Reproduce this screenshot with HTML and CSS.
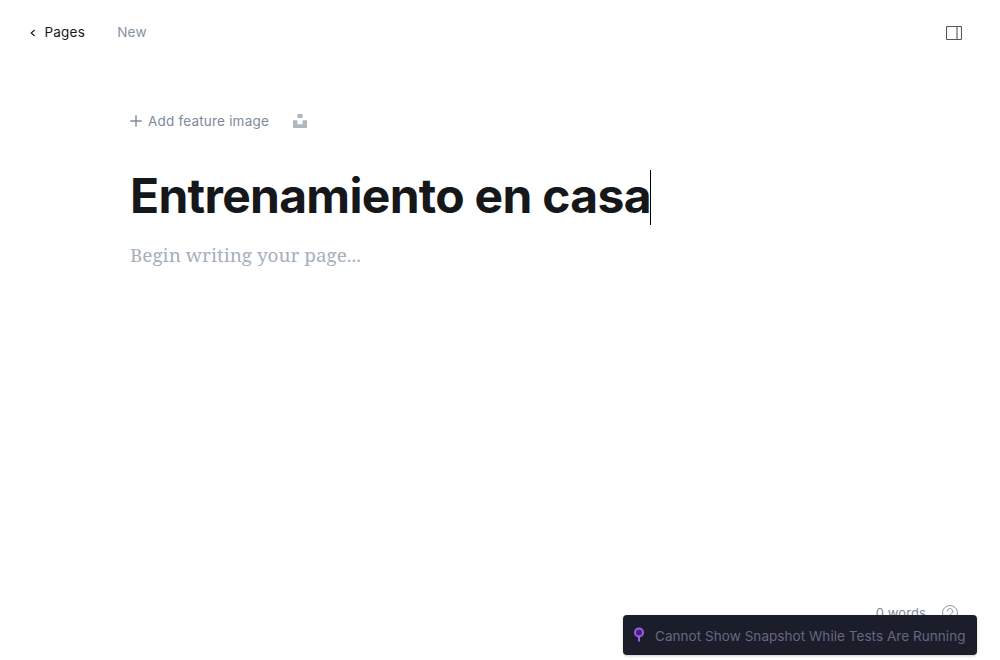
FILE: index.html
```html
<!DOCTYPE html>
<html lang="en">
<head>
<meta charset="utf-8">
<title>Ghost editor</title>
<link rel="stylesheet" href="styles.css">
</head>
<body>
<div class="editor">
  <header class="topbar">
    <nav class="crumbs">
      <a class="back"><svg class="chevron" width="6" height="8" viewBox="0 0 6 8"><path d="M4.6 1 1.2 4l3.4 3"/></svg><span class="back-label">Pages</span></a>
      <span class="status">New</span>
    </nav>
    <svg class="sidebar-icon" width="16" height="14" viewBox="0 0 16 14"><rect x=".5" y=".5" width="15" height="13" rx="1"/><path d="M11 .5v13"/></svg>
  </header>
  <main class="page">
    <div class="feature">
      <svg class="plus" width="12" height="12" viewBox="0 0 12 12"><path d="M6 .3v11.4M.3 6h11.4"/></svg>
      <span class="feature-label">Add feature image</span>
      <svg class="unsplash" width="14" height="14" viewBox="0 0 14 14"><path d="M4.4 0h5.2v4H4.4zM0 6.2h4.4v4h5.2v-4H14V14H0z"/></svg>
    </div>
    <h1 class="title"><span>Entrenamiento en casa</span><i class="caret"></i></h1>
    <p class="placeholder">Begin writing your page...</p>
  </main>
  <footer class="footer">
    <span class="words">0 words</span>
    <svg class="help" width="16" height="16" viewBox="0 0 16 16"><circle cx="8" cy="8" r="7.5"/><path d="M5.1 6.4a2.9 2.7 0 1 1 4.3 2.3C8.3 9.3 8 9.7 8 10.6M8 12v1"/></svg>
  </footer>
  <div class="toast">
    <svg class="pin" width="12" height="16" viewBox="0 0 12 16"><circle class="pin-head" cx="6" cy="5.5" r="4"/><path d="M6 9.5V14.5"/></svg>
    <span class="toast-label">Cannot Show Snapshot While Tests Are Running</span>
  </div>
</div>
</body>
</html>
```
FILE: styles.css
```css
body { margin: 0; background: #fff; font-family: Inter, sans-serif; }
.editor { position: relative; height: 660px; overflow: hidden; display: flex; flex-direction: column; }
svg { display: block; flex: none; fill: none; }
.topbar { display: flex; justify-content: space-between; align-items: center; height: 34px; padding: 16px 38px 0 30px; }
.crumbs, .back { display: flex; align-items: center; }
.crumbs { font-size: 13.5px; line-height: 20px; letter-spacing: .25px; padding-bottom: 2px; }
.back { color: #15171a; gap: 8.4px; }
.chevron { stroke: #15171a; stroke-width: 1.1; margin-top: 2px; }
.status { color: #8492a2; margin-left: 32px; }
.sidebar-icon { stroke: #50565d; stroke-width: 1.1; }
.page { flex: 1; padding: 61px 130px 0; }
.feature { display: flex; align-items: center; height: 20px; color: #7c8b9a; font-size: 13.5px; letter-spacing: .2px; }
.plus { stroke: #7c8b9a; stroke-width: 1.4; }
.feature-label { margin-left: 6px; }
.unsplash { fill: #b0b8bf; margin-left: 24px; }
.title { display: flex; align-items: center; margin: 38px 0 0; height: 56px; font-size: 48px; line-height: 54px; font-weight: 700; letter-spacing: -.71px; color: #15171a; white-space: nowrap; }
.title span { padding-bottom: 2px; }
.caret { width: 1px; height: 55px; margin-left: -1px; background: #000; }
.placeholder { margin: 15px 0 0; font: 18.9px/30px "Noto Serif", Georgia, serif; color: #a5b0bc; }
.footer { display: flex; justify-content: flex-end; align-items: center; gap: 16px; height: 20px; padding: 0 42px 37px 0; color: #7c8b9a; font-size: 13px; letter-spacing: .1px; }
.help { stroke: #8a98a6; }
.toast { position: absolute; left: 623px; top: 615px; width: 354px; height: 40px; box-sizing: border-box; padding-left: 10px; display: flex; align-items: center; gap: 10px; background: #1b1e2a; border-radius: 4px; box-shadow: 0 1px 3px rgba(0, 0, 0, .2); color: #646883; font-size: 13.5px; letter-spacing: .05px; white-space: nowrap; }
.toast-label { padding-top: 1px; }
.pin { stroke: #9f5de8; stroke-width: 2; }
.pin-head { fill: #45237a; }
```
